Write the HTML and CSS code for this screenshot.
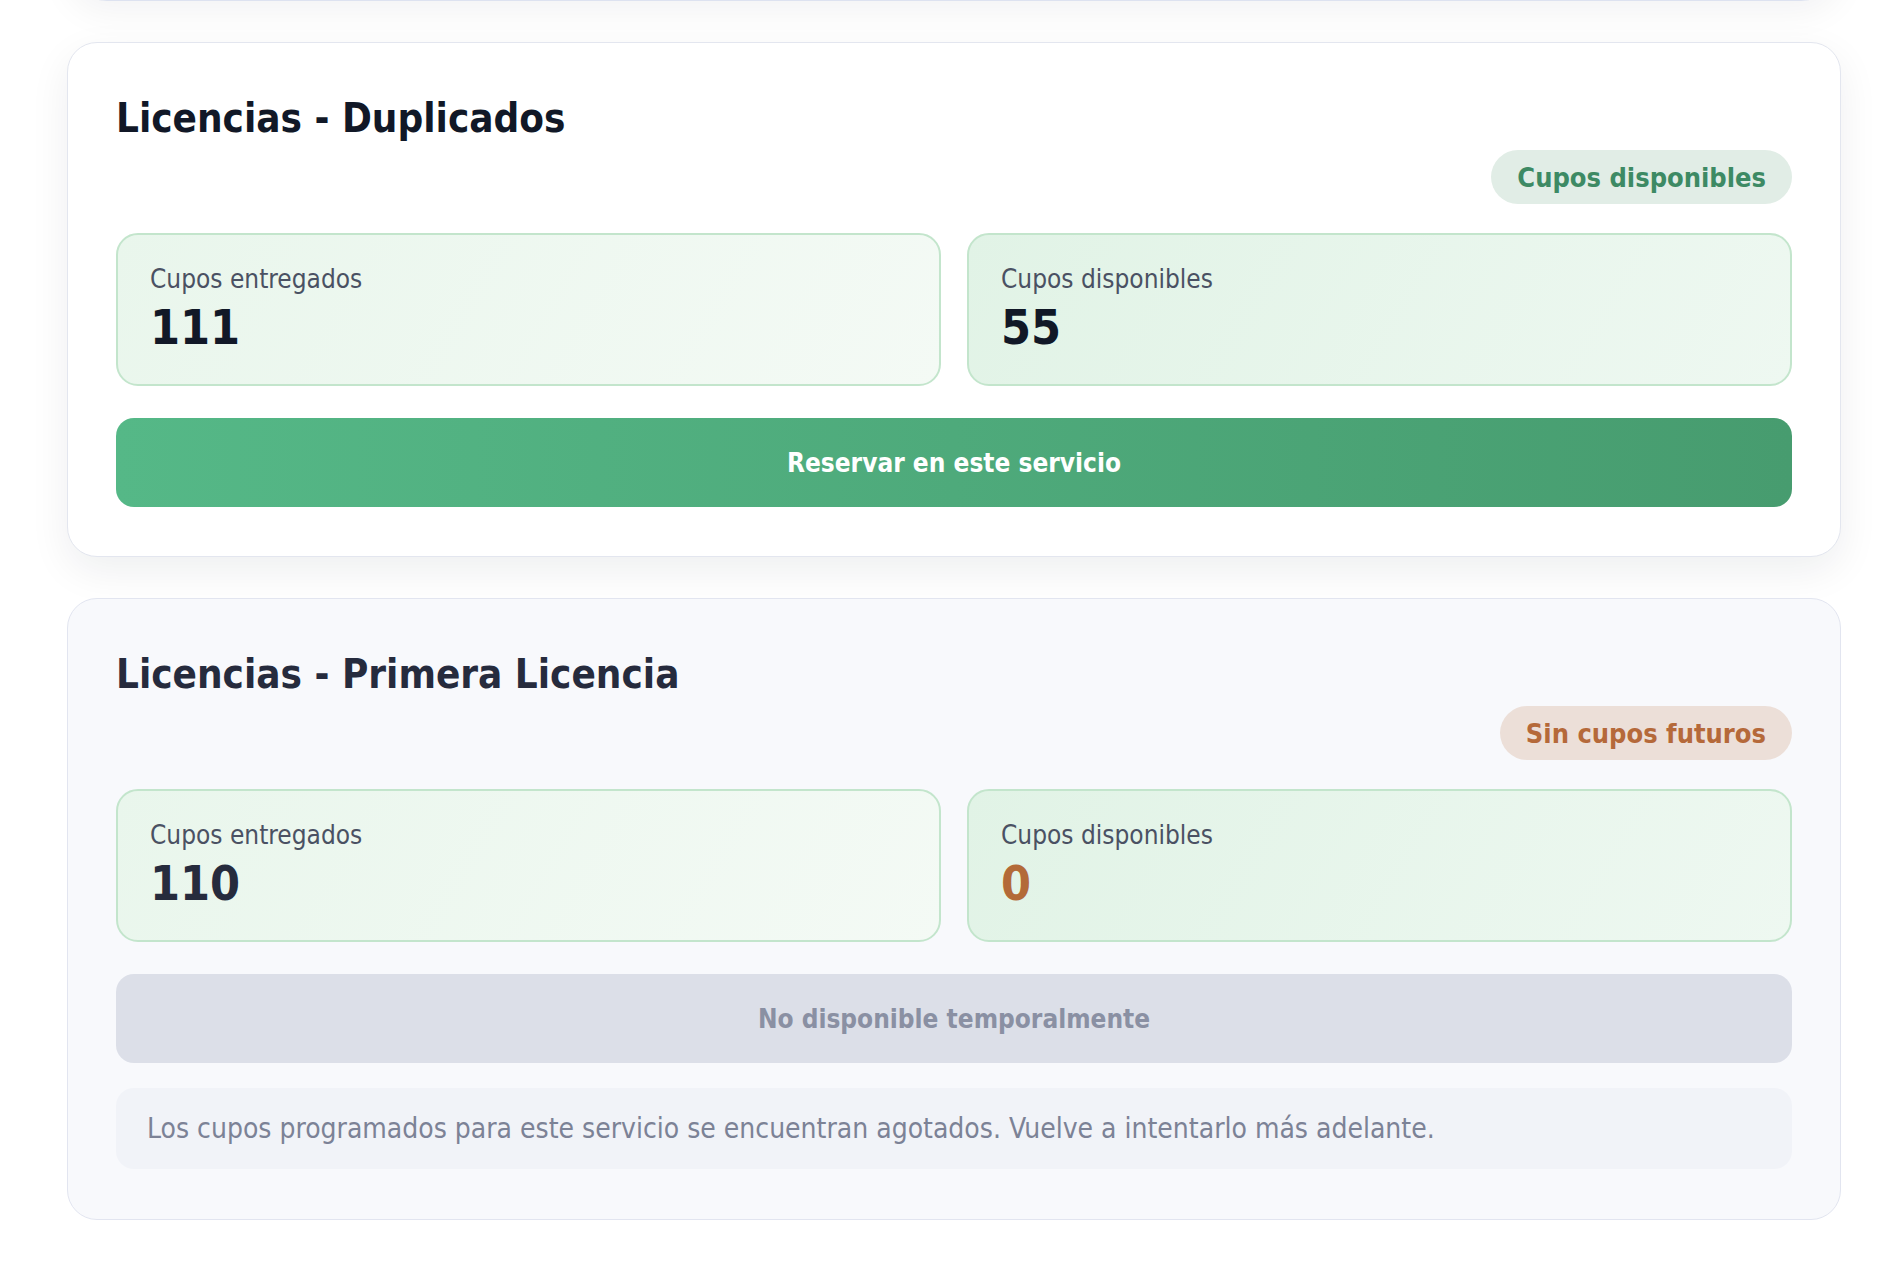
FILE: index.html
```html
<!DOCTYPE html>
<html lang="es">
<head>
<meta charset="utf-8">
<title>Servicios</title>
<link rel="stylesheet" href="styles.css">
</head>
<body>
<div class="list">
  <div class="card card-prev"></div>

  <section class="card card-active">
    <h2 class="title">Licencias - Duplicados</h2>
    <div class="badge-row"><span class="badge badge-ok">Cupos disponibles</span></div>
    <div class="stats">
      <div class="stat">
        <div class="stat-label">Cupos entregados</div>
        <div class="stat-value">111</div>
      </div>
      <div class="stat stat-alt">
        <div class="stat-label">Cupos disponibles</div>
        <div class="stat-value">55</div>
      </div>
    </div>
    <button class="btn btn-primary" type="button">Reservar en este servicio</button>
  </section>

  <section class="card card-muted">
    <h2 class="title title-muted">Licencias - Primera Licencia</h2>
    <div class="badge-row"><span class="badge badge-warn">Sin cupos futuros</span></div>
    <div class="stats">
      <div class="stat">
        <div class="stat-label">Cupos entregados</div>
        <div class="stat-value value-muted">110</div>
      </div>
      <div class="stat stat-alt">
        <div class="stat-label">Cupos disponibles</div>
        <div class="stat-value value-warn">0</div>
      </div>
    </div>
    <button class="btn btn-disabled" type="button" disabled>No disponible temporalmente</button>
    <p class="note">Los cupos programados para este servicio se encuentran agotados. Vuelve a intentarlo más adelante.</p>
  </section>
</div>
</body>
</html>
```
FILE: styles.css
```css
html, body {
  margin: 0;
  padding: 0;
  background: #ffffff;
}
body {
  font-family: "DejaVu Sans Condensed", "DejaVu Sans", sans-serif;
  font-stretch: condensed;
  color: #111827;
  overflow: hidden;
}
.list {
  display: flex;
  flex-direction: column;
  gap: 41px;
  padding: 0 41px 0 67px;
}
.card {
  border: 1px solid #e3e6ef;
  border-radius: 30px;
  padding: 47px 48px 49px;
  box-sizing: border-box;
}
.card-prev {
  height: 120px;
  margin-top: -119px;
  margin-bottom: 0;
  padding: 0;
  background: #ffffff;
  border-radius: 40px;
  border-color: #dde2f0;
  box-shadow: 0 12px 34px rgba(15, 23, 42, 0.05);
}
.card-active {
  background: #ffffff;
  box-shadow: 0 14px 40px rgba(15, 23, 42, 0.07);
}
.card-muted {
  background: #f8f9fc;
  border-color: #e2e5f0;
  padding-bottom: 50px;
}
.title {
  margin: 0;
  padding-top: 4px;
  font-size: 40px;
  line-height: 48px;
  font-weight: 700;
  color: #111827;
}
.title-muted {
  color: #262b3d;
}
.badge-row {
  display: flex;
  justify-content: flex-end;
  margin-top: 8px;
}
.badge {
  display: inline-flex;
  align-items: center;
  height: 54px;
  padding: 0 26px;
  border-radius: 27px;
  font-size: 27px;
  font-weight: 700;
}
.badge-ok {
  background: #e1ede6;
  color: #3d8a64;
}
.badge-warn {
  background: #ecdfd8;
  color: #b5693a;
}
.stats {
  display: grid;
  grid-template-columns: 1fr 1fr;
  gap: 26px;
  margin-top: 29px;
}
.stat {
  border: 2px solid #c3e5cc;
  border-radius: 22px;
  padding: 28px 32px 31px;
  background: linear-gradient(120deg, #e9f6ec 0%, #f4faf5 100%);
}
.stat-alt {
  background: linear-gradient(120deg, #e1f3e6 0%, #eef8f1 100%);
}
.stat-label {
  font-size: 26px;
  line-height: 32px;
  color: #4a5163;
}
.stat-value {
  margin-top: 6px;
  font-size: 48px;
  line-height: 52px;
  font-weight: 700;
  color: #111827;
}
.value-muted {
  color: #262b3d;
}
.value-warn {
  color: #b36a38;
}
.btn {
  display: block;
  width: 100%;
  height: 89px;
  margin-top: 32px;
  border: none;
  border-radius: 18px;
  font-family: inherit;
  font-stretch: condensed;
  font-size: 26px;
  font-weight: 700;
}
.btn-primary {
  background: linear-gradient(90deg, #55b887 0%, #479c6f 100%);
  color: #ffffff;
}
.btn-disabled {
  background: #dcdfe8;
  color: #8a90a3;
}
.note {
  margin: 25px 0 0;
  padding: 0 31px;
  height: 81px;
  display: flex;
  align-items: center;
  background: #f1f3f8;
  border-radius: 18px;
  font-size: 28px;
  color: #7c8296;
}
```
